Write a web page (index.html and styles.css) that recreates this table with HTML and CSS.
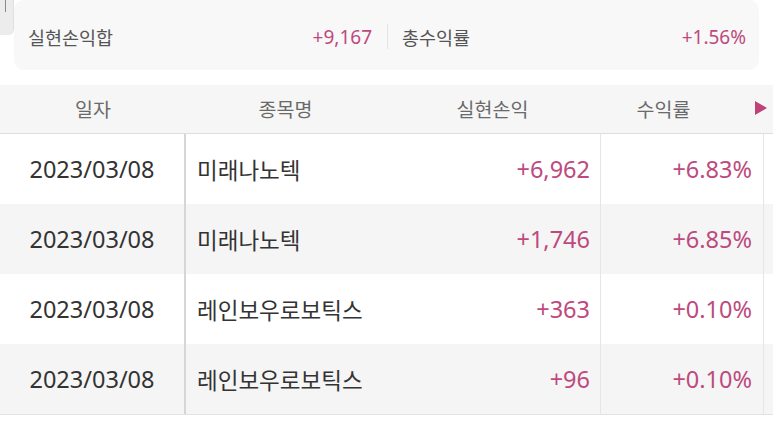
FILE: index.html
```html
<!DOCTYPE html>
<html lang="ko">
<head>
<meta charset="utf-8">
<link rel="stylesheet" href="styles.css">
</head>
<body>
<div class="page">
  <div class="tab"><span class="tab-line"></span></div>
  <div class="summary">
    <div class="sum-item">
      <span class="sum-label">실현손익합</span>
      <span class="sum-value">+9,167</span>
    </div>
    <div class="sum-divider"></div>
    <div class="sum-item sum-item-right">
      <span class="sum-label">총수익률</span>
      <span class="sum-value">+1.56%</span>
    </div>
  </div>

  <div class="table">
    <div class="thead">
      <div class="th c1">일자</div>
      <div class="th c2">종목명</div>
      <div class="th c3">실현손익</div>
      <div class="th c4h">수익률</div>
      <div class="th arrow-cell"><span class="arrow"></span></div>
    </div>
    <div class="row">
      <div class="td c1 date">2023/03/08</div>
      <div class="td c2 name">미래나노텍</div>
      <div class="td c3 num">+6,962</div>
      <div class="td c4 num">+6.83%</div>
      <div class="td c5"></div>
    </div>
    <div class="row alt">
      <div class="td c1 date">2023/03/08</div>
      <div class="td c2 name">미래나노텍</div>
      <div class="td c3 num">+1,746</div>
      <div class="td c4 num">+6.85%</div>
      <div class="td c5"></div>
    </div>
    <div class="row">
      <div class="td c1 date">2023/03/08</div>
      <div class="td c2 name">레인보우로보틱스</div>
      <div class="td c3 num">+363</div>
      <div class="td c4 num">+0.10%</div>
      <div class="td c5"></div>
    </div>
    <div class="row alt last">
      <div class="td c1 date">2023/03/08</div>
      <div class="td c2 name">레인보우로보틱스</div>
      <div class="td c3 num">+96</div>
      <div class="td c4 num">+0.10%</div>
      <div class="td c5"></div>
    </div>
  </div>
</div>
</body>
</html>
```

FILE: styles.css
```css
* { box-sizing: border-box; }
html, body {
  margin: 0;
  padding: 0;
  background: #ffffff;
}
body {
  font-family: "Noto Sans CJK KR", "Noto Sans", sans-serif;
  color: #333333;
  width: 773px;
  height: 429px;
  overflow: hidden;
}
.page {
  position: relative;
  width: 773px;
}
.tab {
  position: absolute;
  left: 0;
  top: 0;
  width: 14px;
  height: 35px;
  background: #ececec;
  border-bottom-right-radius: 6px;
  border-right: 1px solid #e0e0e0;
}
.tab-line {
  position: absolute;
  left: 5px;
  top: 0;
  width: 1px;
  height: 12px;
  background: #8a8a8a;
}
.summary {
  margin: 0 14px 0 14px;
  height: 70px;
  background: #f8f8f8;
  border-radius: 10px;
  display: flex;
  align-items: center;
  padding-top: 3px;
}
.sum-item {
  flex: 0 0 373px;
  display: flex;
  justify-content: space-between;
  align-items: center;
  padding: 0 15px 0 14px;
  font-size: 18.5px;
}
.sum-item-right {
  flex: 1;
  padding: 0 13px 0 14px;
}
.sum-label { color: #555555; }
.sum-value {
  color: #bd4a7e;
  font-family: "Noto Sans", "Noto Sans CJK KR", sans-serif;
  font-size: 19px;
}
.sum-divider {
  width: 1px;
  height: 25px;
  background: #e3e3e3;
}
.table {
  margin-top: 15px;
}
.thead {
  display: flex;
  height: 49px;
  background: #f6f6f6;
  border-bottom: 1px solid #dedede;
  align-items: center;
}
.th {
  font-size: 19.5px;
  color: #6a6a6a;
  text-align: center;
  padding-bottom: 2px;
}
.thead .c1 { width: 186px; }
.thead .c2 { width: 199px; }
.thead .c3 { width: 215px; }
.c4h { width: 127px; }
.arrow-cell {
  flex: 1;
  display: flex;
  justify-content: flex-end;
  padding-right: 6px;
}
.arrow {
  width: 0;
  height: 0;
  border-top: 7px solid transparent;
  border-bottom: 7px solid transparent;
  border-left: 12px solid #bf4379;
}
.row {
  display: flex;
  height: 70px;
  background: #ffffff;
}
.row.alt { background: #f5f5f5; }
.row.last { border-bottom: 1px solid #e3e3e3; height: 71px; }
.td {
  display: flex;
  align-items: center;
  font-size: 22.5px;
  color: #333333;
  padding-bottom: 1px;
}
.date, .num {
  font-family: "Noto Sans", "Noto Sans CJK KR", sans-serif;
  font-size: 23.5px;
}
.row .c1 {
  width: 186px;
  justify-content: center;
  border-right: 2px solid #d6d6d6;
}
.row .c2 {
  width: 199px;
  padding-left: 11px;
  white-space: nowrap;
}
.row .c3 {
  width: 215px;
  justify-content: flex-end;
  padding-right: 10px;
}
.row .c4 {
  width: 164px;
  justify-content: flex-end;
  padding-right: 11px;
  border-left: 1px solid #e6e6e6;
  border-right: 1px solid #e6e6e6;
}
.c5 { flex: 1; }
.num { color: #bd4a7e; }
```
